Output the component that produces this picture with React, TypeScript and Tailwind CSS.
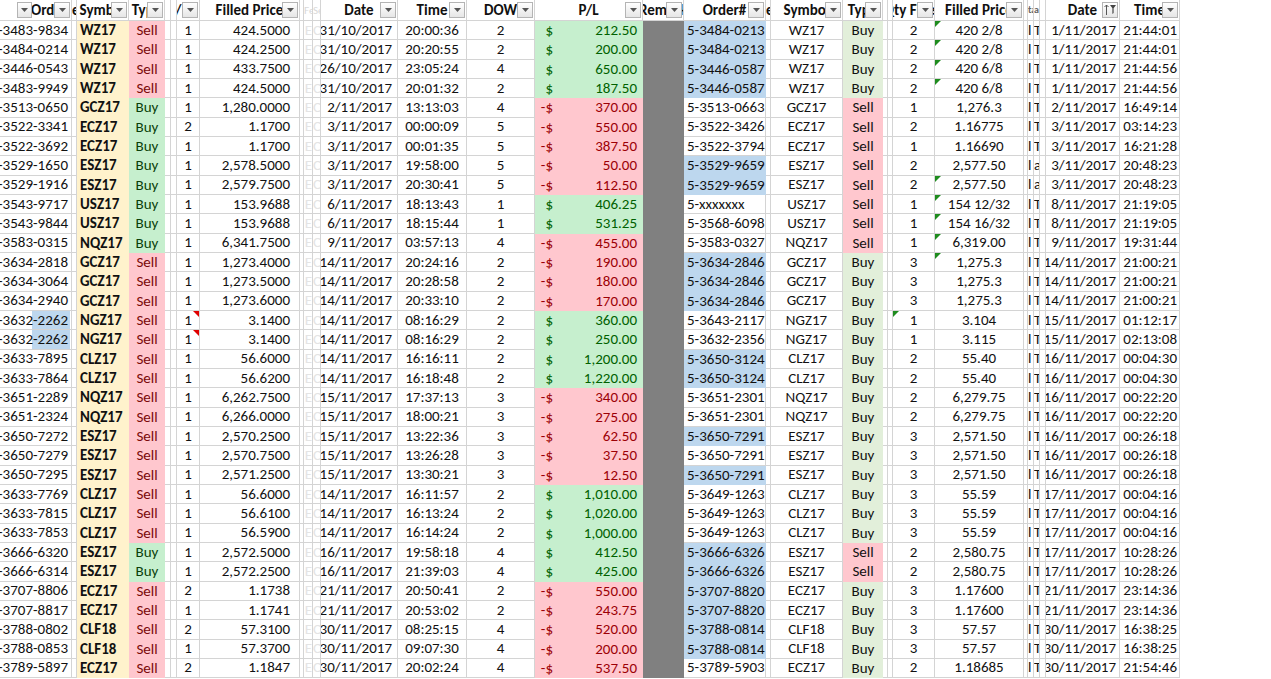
import React from 'react';

type Trade = {
  a: string;
  sym: string;
  type: string;
  qty: string;
  fp: string;
  date: string;
  time: string;
  dow: string;
  pl: string;
  ord: string;
  ordBlue: boolean;
  sym2: string;
  type2: string;
  qty2: string;
  fp2: string;
  it: string;
  date2: string;
  time2: string;
};

const RAW = `-3483-9834|WZ17|Sell|1|424.5000|31/10/2017|20:00:36|2|212.50|5-3484-0213|b|WZ17|Buy|2|420 2/8|IT|1/11/2017|21:44:01
-3484-0214|WZ17|Sell|1|424.2500|31/10/2017|20:20:55|2|200.00|5-3484-0213|b|WZ17|Buy|2|420 2/8|IT|1/11/2017|21:44:01
-3446-0543|WZ17|Sell|1|433.7500|26/10/2017|23:05:24|4|650.00|5-3446-0587|b|WZ17|Buy|2|420 6/8|IT|1/11/2017|21:44:56
-3483-9949|WZ17|Sell|1|424.5000|31/10/2017|20:01:32|2|187.50|5-3446-0587|b|WZ17|Buy|2|420 6/8|IT|1/11/2017|21:44:56
-3513-0650|GCZ17|Buy|1|1,280.0000|2/11/2017|13:13:03|4|-370.00|5-3513-0663||GCZ17|Sell|1|1,276.3|IT|2/11/2017|16:49:14
-3522-3341|ECZ17|Buy|2|1.1700|3/11/2017|00:00:09|5|-550.00|5-3522-3426||ECZ17|Sell|2|1.16775|IT|3/11/2017|03:14:23
-3522-3692|ECZ17|Buy|1|1.1700|3/11/2017|00:01:35|5|-387.50|5-3522-3794||ECZ17|Sell|1|1.16690|IT|3/11/2017|16:21:28
-3529-1650|ESZ17|Buy|1|2,578.5000|3/11/2017|19:58:00|5|-50.00|5-3529-9659|b|ESZ17|Sell|2|2,577.50|la|3/11/2017|20:48:23
-3529-1916|ESZ17|Buy|1|2,579.7500|3/11/2017|20:30:41|5|-112.50|5-3529-9659|b|ESZ17|Sell|2|2,577.50|la|3/11/2017|20:48:23
-3543-9717|USZ17|Buy|1|153.9688|6/11/2017|18:13:43|1|406.25|5-xxxxxxx||USZ17|Sell|1|154 12/32|IT|8/11/2017|21:19:05
-3543-9844|USZ17|Buy|1|153.9688|6/11/2017|18:15:44|1|531.25|5-3568-6098||USZ17|Sell|1|154 16/32|IT|8/11/2017|21:19:05
-3583-0315|NQZ17|Buy|1|6,341.7500|9/11/2017|03:57:13|4|-455.00|5-3583-0327||NQZ17|Sell|1|6,319.00|IT|9/11/2017|19:31:44
-3634-2818|GCZ17|Sell|1|1,273.4000|14/11/2017|20:24:16|2|-190.00|5-3634-2846|b|GCZ17|Buy|3|1,275.3|IT|14/11/2017|21:00:21
-3634-3064|GCZ17|Sell|1|1,273.5000|14/11/2017|20:28:58|2|-180.00|5-3634-2846|b|GCZ17|Buy|3|1,275.3|IT|14/11/2017|21:00:21
-3634-2940|GCZ17|Sell|1|1,273.6000|14/11/2017|20:33:10|2|-170.00|5-3634-2846|b|GCZ17|Buy|3|1,275.3|IT|14/11/2017|21:00:21
-3632-2262|NGZ17|Sell|1|3.1400|14/11/2017|08:16:29|2|360.00|5-3643-2117||NGZ17|Buy|1|3.104|IT|15/11/2017|01:12:17
-3632-2262|NGZ17|Sell|1|3.1400|14/11/2017|08:16:29|2|250.00|5-3632-2356||NGZ17|Buy|1|3.115|IT|15/11/2017|02:13:08
-3633-7895|CLZ17|Sell|1|56.6000|14/11/2017|16:16:11|2|1,200.00|5-3650-3124|b|CLZ17|Buy|2|55.40|IT|16/11/2017|00:04:30
-3633-7864|CLZ17|Sell|1|56.6200|14/11/2017|16:18:48|2|1,220.00|5-3650-3124|b|CLZ17|Buy|2|55.40|IT|16/11/2017|00:04:30
-3651-2289|NQZ17|Sell|1|6,262.7500|15/11/2017|17:37:13|3|-340.00|5-3651-2301||NQZ17|Buy|2|6,279.75|IT|16/11/2017|00:22:20
-3651-2324|NQZ17|Sell|1|6,266.0000|15/11/2017|18:00:21|3|-275.00|5-3651-2301||NQZ17|Buy|2|6,279.75|IT|16/11/2017|00:22:20
-3650-7272|ESZ17|Sell|1|2,570.2500|15/11/2017|13:22:36|3|-62.50|5-3650-7291|b|ESZ17|Buy|3|2,571.50|IT|16/11/2017|00:26:18
-3650-7279|ESZ17|Sell|1|2,570.7500|15/11/2017|13:26:28|3|-37.50|5-3650-7291||ESZ17|Buy|3|2,571.50|IT|16/11/2017|00:26:18
-3650-7295|ESZ17|Sell|1|2,571.2500|15/11/2017|13:30:21|3|-12.50|5-3650-7291|b|ESZ17|Buy|3|2,571.50|IT|16/11/2017|00:26:18
-3633-7769|CLZ17|Sell|1|56.6000|14/11/2017|16:11:57|2|1,010.00|5-3649-1263||CLZ17|Buy|3|55.59|IT|17/11/2017|00:04:16
-3633-7815|CLZ17|Sell|1|56.6100|14/11/2017|16:13:24|2|1,020.00|5-3649-1263||CLZ17|Buy|3|55.59|IT|17/11/2017|00:04:16
-3633-7853|CLZ17|Sell|1|56.5900|14/11/2017|16:14:24|2|1,000.00|5-3649-1263||CLZ17|Buy|3|55.59|IT|17/11/2017|00:04:16
-3666-6320|ESZ17|Buy|1|2,572.5000|16/11/2017|19:58:18|4|412.50|5-3666-6326|b|ESZ17|Sell|2|2,580.75|IT|17/11/2017|10:28:26
-3666-6314|ESZ17|Buy|1|2,572.2500|16/11/2017|21:39:03|4|425.00|5-3666-6326|b|ESZ17|Sell|2|2,580.75|IT|17/11/2017|10:28:26
-3707-8806|ECZ17|Sell|2|1.1738|21/11/2017|20:50:41|2|-550.00|5-3707-8820|b|ECZ17|Buy|3|1.17600|IT|21/11/2017|23:14:36
-3707-8817|ECZ17|Sell|1|1.1741|21/11/2017|20:53:02|2|-243.75|5-3707-8820|b|ECZ17|Buy|3|1.17600|IT|21/11/2017|23:14:36
-3788-0802|CLF18|Sell|2|57.3100|30/11/2017|08:25:15|4|-520.00|5-3788-0814|b|CLF18|Buy|3|57.57|IT|30/11/2017|16:38:25
-3788-0853|CLF18|Sell|1|57.3700|30/11/2017|09:07:30|4|-200.00|5-3788-0814|b|CLF18|Buy|3|57.57|IT|30/11/2017|16:38:25
-3789-5897|ECZ17|Sell|2|1.1847|30/11/2017|20:02:24|4|-537.50|5-3789-5903||ECZ17|Buy|2|1.18685|IT|30/11/2017|21:54:46`;

const trades: Trade[] = RAW.split('\n').map((line) => {
  const f = line.split('|');
  return {
    a: f[0], sym: f[1], type: f[2], qty: f[3], fp: f[4], date: f[5], time: f[6], dow: f[7], pl: f[8],
    ord: f[9], ordBlue: f[10] === 'b', sym2: f[11], type2: f[12], qty2: f[13], fp2: f[14], it: f[15],
    date2: f[16], time2: f[17],
  };
});

// rows (0-based) with little cell markers
const RED_MARK = [15, 16];
const FP2_MARK = [0, 1, 2, 3, 8, 9, 10, 11, 12];
const QTY2_MARK = [15];

const grid = 'shrink-0 h-full border-r border-b border-[#d4d4d4] overflow-hidden whitespace-nowrap flex items-center';
const filled = 'shrink-0 h-full overflow-hidden whitespace-nowrap flex items-center';

const Arrow = () => (
  <svg width="7" height="4" viewBox="0 0 7 4">
    <path d="M0 0h7L3.5 4z" fill="#555" />
  </svg>
);

const Dropdown = () => (
  <span className="absolute right-[1px] top-[2px] w-[16px] h-[16px] border border-[#b4b4b4] bg-gradient-to-b from-white to-[#e6e6e6] flex items-center justify-center">
    <Arrow />
  </span>
);

const FilterSort = () => (
  <span className="absolute right-[1px] top-[2px] w-[16px] h-[16px] border border-[#b4b4b4] bg-gradient-to-b from-white to-[#e6e6e6] flex items-center justify-center">
    <svg width="14" height="12" viewBox="0 0 14 12">
      <path d="M3.5 1v10M1.5 3l2-2 2 2" stroke="#555" strokeWidth="1" fill="none" />
      <path d="M7 1h6l-2.4 3.2V9L9.4 10V4.2z" fill="#444" />
    </svg>
  </span>
);

const Head = ({ w, label, dd = true, children }: { w: string; label?: string; dd?: boolean; children?: React.ReactNode }) => (
  <div className={`${grid} ${w} relative justify-center font-bold`}>
    {label && <span>{label}</span>}
    {children}
    {dd && <Dropdown />}
  </div>
);

const HeaderRow = () => (
  <div className="flex h-[21px]">
    <div className={`${grid} w-[72px] relative font-bold`}>
      <span className="absolute left-[17px] top-[2px] w-[15px] h-[16px] border border-[#b4b4b4] bg-gradient-to-b from-white to-[#e6e6e6] flex items-center justify-center">
        <Arrow />
      </span>
      <span className="ml-[31px]">Ord</span>
      <Dropdown />
    </div>
    <div className={`${grid} w-[5px] font-bold`}>e</div>
    <Head w="w-[52px]" label="Symbol" />
    <Head w="w-[36px]" label="Type" />
    <div className={`${grid} w-[6px]`} />
    <div className={`${grid} w-[6px]`} />
    <div className={`${grid} w-[23px] relative font-bold justify-start`}>
      <span className="-ml-[2px]">/</span>
      <Dropdown />
    </div>
    <Head w="w-[100px]" label="Filled Price" />
    <div className={`${grid} w-[4px]`} />
    <div className={`${grid} w-[9px] text-[#d8d8d8] text-[11px]`}>Fe</div>
    <div className={`${grid} w-[8px] text-[#d8d8d8] text-[11px]`}>Se</div>
    <Head w="w-[77px]" label="Date" />
    <Head w="w-[69px]" label="Time" />
    <Head w="w-[68px]" label="DOW" />
    <Head w="w-[108px]" label="P/L" />
    <Head w="w-[41px]" label="Remark" />
    <Head w="w-[82px]" label="Order#" />
    <div className={`${grid} w-[5px] font-bold`}>e</div>
    <Head w="w-[72px]" label="Symbol" />
    <Head w="w-[40px]" label="Type" />
    <div className={`${grid} w-[5px]`} />
    <div className={`${grid} w-[5px]`} />
    <Head w="w-[42px]" label="Qty Filled" />
    <Head w="w-[89px]" label="Filled Price" />
    <div className={`${grid} w-[4px]`} />
    <div className={`${grid} w-[6px] text-[10px] font-bold text-[#666]`}>ta</div>
    <div className={`${grid} w-[6px] text-[10px] font-bold text-[#666]`}>ap</div>
    <div className={`${grid} w-[6px]`} />
    <Head w="w-[74px]" label="Date" dd={false}>
      <FilterSort />
    </Head>
    <Head w="w-[60px]" label="Time" />
  </div>
);

const Mark = ({ side, color }: { side: 'tl' | 'tr'; color: 'red' | 'green' }) => (
  <span
    className={`absolute top-0 w-0 h-0 border-t-[6px] ${side === 'tr' ? 'right-0 border-l-[6px] border-l-transparent' : 'left-0 border-r-[6px] border-r-transparent'} ${color === 'red' ? 'border-t-[#e00000]' : 'border-t-[#1e8c1e]'}`}
  />
);

const DataRow = ({ t, i }: { t: Trade; i: number }) => {
  const leftBuy = t.type === 'Buy';
  const neg = t.pl.startsWith('-');
  const plVal = neg ? t.pl.slice(1) : t.pl;
  const rightBuy = t.type2 === 'Buy';
  const aBlue = i === 15 || i === 16;
  return (
    <div className="flex h-[19.33px]">
      <div
        className={`${grid} w-[72px] justify-end pr-[3px] ${aBlue ? 'bg-[linear-gradient(to_right,white_32px,#bdd7ee_32px,#bdd7ee_70px,white_70px)]' : ''}`}
      >
        {t.a}
      </div>
      <div className={`${grid} w-[5px]`} />
      <div className={`${filled} w-[52px] bg-[#fff2cc] font-bold pl-[3px]`}>{t.sym}</div>
      <div
        className={`${filled} w-[36px] justify-center ${leftBuy ? 'bg-[#c6efce] text-[#0a3f0a]' : 'bg-[#ffc7ce] text-[#7a0a0a]'}`}
      >
        {t.type}
      </div>
      <div className={`${grid} w-[6px]`} />
      <div className={`${grid} w-[6px]`} />
      <div className={`${grid} w-[23px] justify-center relative`}>
        {t.qty}
        {RED_MARK.includes(i) && <Mark side="tr" color="red" />}
      </div>
      <div className={`${grid} w-[100px] justify-end pr-[9px]`}>{t.fp}</div>
      <div className={`${grid} w-[4px]`} />
      <div className={`${grid} w-[9px] text-[#e4e4e4] justify-end`}>E</div>
      <div className={`${grid} w-[8px] text-[#e4e4e4]`}>C</div>
      <div className={`${grid} w-[77px] justify-end pr-[5px]`}>{t.date}</div>
      <div className={`${grid} w-[69px] justify-center`}>{t.time}</div>
      <div className={`${grid} w-[68px] justify-center`}>{t.dow}</div>
      <div
        className={`${filled} w-[108px] ${neg ? 'bg-[#ffc7ce] text-[#9c0006]' : 'bg-[#c6efce] text-[#006100]'}`}
      >
        <span className="w-[18px] text-right">{neg ? '-$' : '$'}</span>
        <span className="flex-1 text-right pr-[6px]">{plVal}</span>
      </div>
      <div className={`${filled} w-[41px] bg-[#808080]`} />
      <div className={`${t.ordBlue ? filled + ' bg-[#bdd7ee]' : grid} w-[82px] pl-[3px]`}>{t.ord}</div>
      <div className={`${grid} w-[5px]`} />
      <div className={`${grid} w-[72px] justify-center`}>{t.sym2}</div>
      <div className={`${filled} w-[40px] justify-center ${rightBuy ? 'bg-[#e2efda]' : 'bg-[#ffc7ce]'}`}>{t.type2}</div>
      <div className={`${grid} w-[5px]`} />
      <div className={`${grid} w-[5px]`} />
      <div className={`${grid} w-[42px] justify-center relative`}>
        {t.qty2}
        {QTY2_MARK.includes(i) && <Mark side="tl" color="green" />}
      </div>
      <div className={`${grid} w-[89px] justify-center relative`}>
        {t.fp2}
        {FP2_MARK.includes(i) && <Mark side="tl" color="green" />}
      </div>
      <div className={`${grid} w-[4px]`} />
      <div className={`${grid} w-[6px]`}>{t.it.charAt(0) === 'I' ? 'l' : t.it.charAt(0)}</div>
      <div className={`${grid} w-[6px]`}>{t.it.charAt(1)}</div>
      <div className={`${grid} w-[6px]`} />
      <div className={`${grid} w-[74px] justify-end pr-[3px]`}>{t.date2}</div>
      <div className={`${grid} w-[60px] justify-end pr-[2px]`}>{t.time2}</div>
    </div>
  );
};

export default function App() {
  return (
    <div className="w-[1271px] h-[679px] overflow-hidden bg-white text-[15px] leading-none text-[#111] font-['Carlito','Liberation_Sans_Narrow','Liberation_Sans',sans-serif]">
      <HeaderRow />
      {trades.map((t, i) => (
        <DataRow key={i} t={t} i={i} />
      ))}
    </div>
  );
}
